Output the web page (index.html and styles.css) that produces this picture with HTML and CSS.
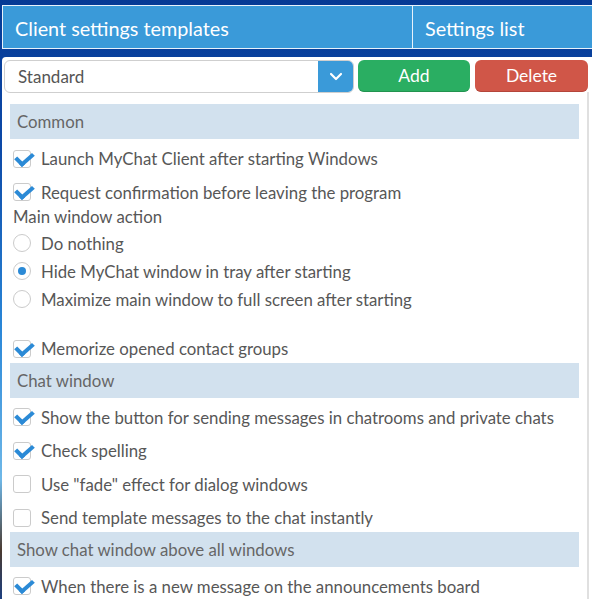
FILE: index.html
```html
<!DOCTYPE html>
<html lang="en">
<head>
<meta charset="utf-8">
<title>Client settings templates</title>
<link rel="stylesheet" href="styles.css">
</head>
<body>
<div class="app">
  <div class="tabs">
    <div class="tab tab-main">Client settings templates</div>
    <div class="tab tab-list">Settings list</div>
  </div>
  <div class="panel">
    <div class="toolbar">
      <div class="select">
        <span class="select-value">Standard</span>
        <span class="select-btn">
          <svg width="14" height="9" viewBox="0 0 14 9"><path d="M2 2 L7 7 L12 2" fill="none" stroke="#fff" stroke-width="2.2" stroke-linecap="round" stroke-linejoin="round"/></svg>
        </span>
      </div>
      <button class="btn btn-add">Add</button>
      <button class="btn btn-del">Delete</button>
    </div>
    <div class="content">
      <div class="section">Common</div>
      <div class="row check"><span class="cb on"></span>Launch MyChat Client after starting Windows</div>
      <div class="row check"><span class="cb on"></span>Request confirmation before leaving the program</div>
      <div class="label">Main window action</div>
      <div class="row radio"><span class="rb"></span>Do nothing</div>
      <div class="row radio"><span class="rb on"></span>Hide MyChat window in tray after starting</div>
      <div class="row radio"><span class="rb"></span>Maximize main window to full screen after starting</div>
      <div class="spacer"></div>
      <div class="row check"><span class="cb on"></span>Memorize opened contact groups</div>
      <div class="section">Chat window</div>
      <div class="row check"><span class="cb on"></span>Show the button for sending messages in chatrooms and private chats</div>
      <div class="row check"><span class="cb on"></span>Check spelling</div>
      <div class="row check"><span class="cb"></span>Use "fade" effect for dialog windows</div>
      <div class="row check"><span class="cb"></span>Send template messages to the chat instantly</div>
      <div class="section">Show chat window above all windows</div>
      <div class="row check"><span class="cb on"></span>When there is a new message on the announcements board</div>
    </div>
  </div>
</div>
</body>
</html>
```
FILE: styles.css
```css
* { box-sizing: border-box; }
html, body { height: 100%; }
body {
  margin: 0;
  overflow: hidden;
  font-family: "Lato", "Open Sans", sans-serif;
  background: linear-gradient(180deg, #063a95 0%, #0d4aa8 25%, #2a87d8 55%, #6fb8e8 80%, #4a3a30 92%, #1c3f80 100%);
}
.app {
  padding-left: 2px;
  padding-top: 5px;
  height: 100%;
  display: flex;
  flex-direction: column;
}
.tabs {
  display: flex;
  height: 44px;
  flex: none;
  background: #0a3c93;
}
.tab {
  background: #3a9ad9;
  border: 1px solid #e8f2fb;
  color: #fff;
  font-size: 19.8px;
  display: flex;
  align-items: center;
  padding-top: 1px;
}
.tab-main { width: 410px; padding-left: 12px; border-right: none; }
.tab-list { flex: 1; padding-left: 12px; border-right: none; }
.panel {
  margin-top: 8px;
  flex: 1;
  background: #fff;
  border-top-left-radius: 4px;
  display: flex;
  flex-direction: column;
}
.toolbar {
  display: flex;
  padding: 3px 4px 0 2px;
  height: 36px;
  flex: none;
}
.select {
  width: 350px;
  height: 33px;
  border: 1px solid #cfcfcf;
  border-radius: 6px;
  display: flex;
  overflow: hidden;
}
.select-value {
  flex: 1;
  display: flex;
  align-items: center;
  padding-left: 13px;
  font-size: 17px;
  color: #555;
}
.select-btn {
  width: 36px;
  margin: -1px -1px -1px 0;
  background: #3a9ad9;
  display: flex;
  align-items: center;
  justify-content: center;
  border-radius: 0 6px 6px 0;
}
.btn {
  height: 32px;
  border: none;
  border-radius: 6px;
  color: #fff;
  font-family: "Lato", "Open Sans", sans-serif;
  font-size: 17.5px;
  padding: 0;
}
.btn-add { width: 112px; margin-left: 4px; background: #2aae62; border-bottom: 1px solid #22934f; }
.btn-del { width: 113px; margin-left: 5px; background: #d05648; border-bottom: 1px solid #b4463a; }
.content {
  margin-top: -1px;
  width: 587px;
  flex: 1;
  border-right: 2px solid #e0e0e0;
  padding: 12px 8px 0 8px;
  color: #575757;
  font-size: 16.8px;
}
.section {
  height: 35px;
  background: #d2e1ee;
  color: #666;
  display: flex;
  align-items: center;
  padding-left: 7px;
}
.row {
  display: flex;
  align-items: center;
  padding-left: 3px;
}
.check { height: 28px; margin-top: 5.5px; }
.radio { height: 28px; }
.label { height: 21px; padding-left: 3px; display: flex; align-items: center; margin-bottom: 2px; }
.spacer { height: 16px; }
.cb, .rb {
  width: 18px;
  height: 18px;
  margin-right: 10px;
  flex: none;
  border: 1px solid #cbcbcb;
  background: #fff;
  position: relative;
}
.cb { border-radius: 3px; }
.rb { border-radius: 50%; }
.cb.on::after {
  content: "";
  position: absolute;
  width: 7px;
  height: 13px;
  border-right: 4px solid #2b8ad6;
  border-bottom: 4px solid #2b8ad6;
  transform: rotate(45deg) skewX(-4deg);
  transform-origin: center;
  left: 5px;
  top: -2px;
}
.rb.on::after {
  content: "";
  position: absolute;
  left: 4px;
  top: 4px;
  width: 8px;
  height: 8px;
  border-radius: 50%;
  background: #2b8ad6;
}
```
